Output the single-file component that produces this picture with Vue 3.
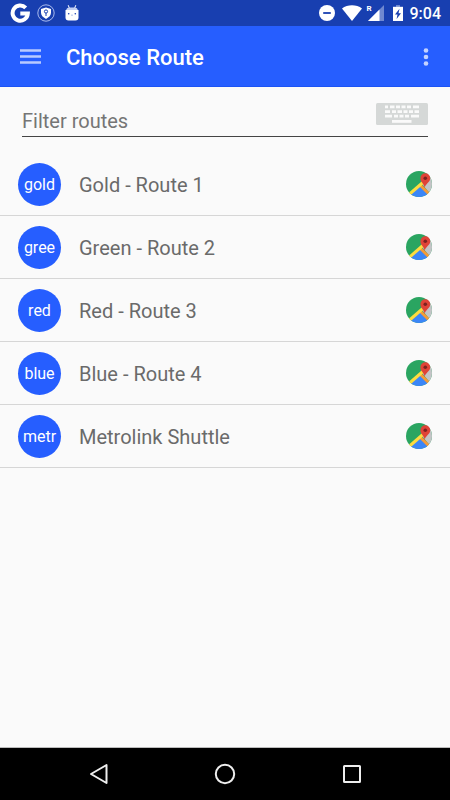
<template>
  <div class="screen">
    <div class="status-bar">
      <div class="status-left">
        <svg class="status-google" viewBox="0 0 20 20" aria-hidden="true">
          <path d="M15.7 4.800A7.600 7.600 0 1 0 17.800 10.600H10.300" fill="none" stroke="#fff" stroke-width="4" />
        </svg>
        <svg class="status-shield" viewBox="0 0 18 18" aria-hidden="true">
          <circle cx="9" cy="9" r="8.2" fill="none" stroke="#a9baec" stroke-width="1" />
          <path d="M9 3.6L14 5v3.6c0 2.7-1.900 4.9-5 6.3-3.100-1.4-5-3.6-5-6.3V5z" fill="#fff" />
          <circle cx="9" cy="7.5" r="1.600" fill="none" stroke="#183fb0" stroke-width="1" />
          <path d="M9 9v3" stroke="#183fb0" stroke-width="1" />
        </svg>
        <svg class="status-droid" viewBox="0 0 14 18" aria-hidden="true">
          <path d="M3.2 1.2l1.2 3M10.8 1.2l-1.2 3" stroke="#fff" stroke-width="1" />
          <path d="M1 6.2Q1.6 3.4 4 3.4h6q2.4 0 3 2.8z" fill="#c3cff3" />
          <path d="M.5 6h13v7.500q0 3-3 3h-7q-3 0-3-3z" fill="#fff" />
          <circle cx="3.7" cy="9.7" r=".8" fill="#183fb0" />
          <circle cx="10.3" cy="9.7" r=".8" fill="#183fb0" />
          <path d="M6 10.8l1 .7 1-.7" fill="none" stroke="#8fa5e3" stroke-width=".7" />
        </svg>
      </div>
      <div class="status-right">
        <svg class="status-dnd" viewBox="0 0 16 16" aria-hidden="true">
          <circle cx="8" cy="8" r="8" fill="#fff" />
          <path d="M4.2 8h7.6" stroke="#183fb0" stroke-width="1.8" />
        </svg>
        <svg class="status-wifi" viewBox="0 0 20 16" aria-hidden="true">
          <path d="M0 3.5C5.5-.8 14.5-.8 20 3.5L10 16z" fill="#fff" />
        </svg>
        <div class="status-cell">
          <span class="roaming">R</span>
          <svg viewBox="0 0 16 16" aria-hidden="true">
            <path d="M16 0v16H0z" fill="#6f88d0" />
            <path d="M11.5 4.5V16H0z" fill="#fff" />
          </svg>
        </div>
        <svg class="status-battery" viewBox="0 0 10 16" aria-hidden="true">
          <path d="M3 0h4v2H3z" fill="#6f88d0" />
          <path d="M0 1.8h10V16H0z" fill="#fff" />
          <path d="M6.5 3.8L2 9.6h2.5L3.6 14 8 8.2H5.5z" fill="#183fb0" />
        </svg>
        <span class="clock">9:04</span>
      </div>
    </div>

    <header class="toolbar">
      <button class="icon-btn menu-btn" type="button" aria-label="Open menu">
        <svg width="22" height="16" viewBox="0 0 22 16">
          <path d="M0 1.500h21M0 7.500h21M0 13.500h21" stroke="#b9caff" stroke-width="2.400" />
        </svg>
      </button>
      <h1>Choose Route</h1>
      <button class="icon-btn more-btn" type="button" aria-label="More options">
        <svg width="6" height="20" viewBox="0 0 6 20">
          <circle cx="3" cy="3.5" r="2.3" fill="#c4d2ff" />
          <circle cx="3" cy="10" r="2.3" fill="#c4d2ff" />
          <circle cx="3" cy="16.5" r="2.3" fill="#c4d2ff" />
        </svg>
      </button>
    </header>

    <main>
      <div class="filter">
        <input v-model="filter" type="text" placeholder="Filter routes" aria-label="Filter routes" />
        <button class="icon-btn keyboard-btn" type="button" aria-label="Keyboard">
          <svg width="52" height="22" viewBox="0 0 52 22">
            <rect width="52" height="22" rx="1.5" fill="#d5d8d7" />
            <g fill="none" stroke="#fafafa" stroke-width="2.800">
              <path d="M9 3.8h3M14 3.8h4.5M20 3.8h4M25.5 3.8h4M31 3.8h4M37 3.8h6" />
              <path d="M9 8.6h5M16 8.6h4M21.5 8.6h4.5M27.5 8.6h4M33 8.6h4M38.5 8.6h4.5" />
              <path d="M9 13.2h7M18 13.2h4M23.5 13.2h4M29 13.2h4M35 13.2h8" />
              <path d="M16 18.4h19.5" />
            </g>
          </svg>
        </button>
      </div>

      <ul class="routes">
        <li v-for="route in filteredRoutes" :key="route.name" class="route">
          <span class="badge">{{ route.code }}</span>
          <span class="name">{{ route.name }}</span>
          <button class="icon-btn" type="button" :aria-label="'Show ' + route.name + ' on map'">
            <svg width="26" height="28" viewBox="0 0 26 28">
              <defs>
                <clipPath :id="'map-' + route.code">
                  <circle cx="13" cy="14" r="13" />
                </clipPath>
              </defs>
              <g :clip-path="'url(#map-' + route.code + ')'">
                <path d="M0 0h26v28H0z" fill="#2aa561" />
                <path d="M26 6L16 14l10 12z" fill="#c3c4c6" />
                <path d="M3 26l10.500-10.500L24 26v2H3z" fill="#3b86f7" />
                <path d="M14.500 15.500l8 8" stroke="#f79a35" stroke-width="2.800" />
                <path d="M2.500 25L18 11.500" stroke="#fddc3f" stroke-width="3" />
              </g>
              <path d="M18.700 18c-.3-4.200-4.300-5.800-4.300-9.800a4.900 4.900 0 0 1 9.800 0C24.200 12.200 19.200 13.800 18.700 18z" fill="#df4337" />
              <circle cx="19.3" cy="8.2" r="1.8" fill="#7a2220" />
            </svg>
          </button>
        </li>
      </ul>
    </main>

    <nav class="nav-bar">
      <button class="icon-btn" type="button" aria-label="Back">
        <svg width="22" height="22" viewBox="0 0 22 22">
          <path d="M19.500 2v18L4 11z" fill="none" stroke="#eee" stroke-width="2" stroke-linejoin="round" />
        </svg>
      </button>
      <button class="icon-btn" type="button" aria-label="Home">
        <svg width="22" height="22" viewBox="0 0 22 22">
          <circle cx="11" cy="11" r="9.2" fill="none" stroke="#eee" stroke-width="2" />
        </svg>
      </button>
      <button class="icon-btn" type="button" aria-label="Recent apps">
        <svg width="22" height="22" viewBox="0 0 22 22">
          <rect x="3" y="3" width="16" height="16" rx=".5" fill="none" stroke="#eee" stroke-width="2" />
        </svg>
      </button>
    </nav>
  </div>
</template>

<script setup>
import { ref, computed } from 'vue';

const filter = ref('');

const routes = [
  { code: 'gold', name: 'Gold - Route 1' },
  { code: 'gree', name: 'Green - Route 2' },
  { code: 'red', name: 'Red - Route 3' },
  { code: 'blue', name: 'Blue - Route 4' },
  { code: 'metr', name: 'Metrolink Shuttle' },
];

const filteredRoutes = computed(() =>
  routes.filter((r) => r.name.toLowerCase().includes(filter.value.toLowerCase()))
);
</script>

<style>
body {
  margin: 0;
  background: #fafafa;
}
</style>

<style scoped>
.screen {
  display: flex;
  flex-direction: column;
  min-height: 100vh;
  background: #fafafa;
  color: #6a6a6a;
  font-family: Roboto, sans-serif;
}
svg {
  display: block;
}
.icon-btn {
  padding: 0;
  border: none;
  background: none;
  cursor: pointer;
}
.status-bar {
  display: flex;
  align-items: center;
  justify-content: space-between;
  height: 26px;
  padding: 0 9px 0 10px;
  background: #183fb0;
  color: #fff;
}
.status-left,
.status-right {
  display: flex;
  align-items: center;
}
.status-google {
  width: 20px;
  height: 20px;
}
.status-shield {
  width: 18px;
  height: 18px;
  margin-left: 7px;
}
.status-droid {
  width: 14px;
  height: 18px;
  margin-left: 10px;
}
.status-dnd {
  width: 16px;
  height: 16px;
}
.status-wifi {
  width: 20px;
  height: 16px;
  margin-left: 7px;
}
.status-cell {
  display: flex;
  margin-left: 4px;
}
.status-cell svg {
  width: 16px;
  height: 16px;
  margin-left: -4px;
}
.roaming {
  font-size: 8px;
  line-height: 8px;
  font-weight: 700;
}
.status-battery {
  width: 10px;
  height: 16px;
  margin-left: 9px;
}
.clock {
  margin-left: 7px;
  padding-top: 2px;
  font-size: 16px;
  line-height: 20px;
  font-weight: 500;
}
.toolbar {
  display: flex;
  align-items: center;
  box-sizing: border-box;
  height: 61px;
  padding: 2px 21px 0 20px;
  border-bottom: 1px solid #1c53f4;
  background: #265eff;
  color: #fff;
}
.toolbar h1 {
  flex: 1;
  margin: 0 0 0 24px;
  padding-top: 2px;
  font-size: 22px;
  line-height: 28px;
  font-weight: 500;
}
main {
  flex: 1;
}
.filter {
  display: flex;
  align-items: flex-start;
  margin: 16px 22px;
  border-bottom: 1px solid #444;
}
.filter input {
  flex: 1;
  min-width: 0;
  height: 33px;
  padding: 2px 0 0;
  box-sizing: border-box;
  border: none;
  outline: none;
  background: transparent;
  color: #444;
  font-family: inherit;
  font-size: 20px;
}
.filter input::placeholder {
  color: #757575;
  opacity: 1;
}
.routes {
  margin: 0;
  padding: 0;
  list-style: none;
}
.route {
  display: flex;
  align-items: center;
  box-sizing: border-box;
  height: 63px;
  padding: 0 18px;
  border-bottom: 1px solid #d6d6d6;
}
.badge {
  display: flex;
  align-items: center;
  justify-content: center;
  box-sizing: border-box;
  width: 43px;
  height: 43px;
  padding-top: 2px;
  border-radius: 50%;
  background: #265eff;
  color: #fff;
  font-size: 16px;
  line-height: 20px;
}
.name {
  flex: 1;
  margin-left: 18px;
  padding-top: 2px;
  font-size: 20px;
  line-height: 24px;
}
.nav-bar {
  display: flex;
  align-items: center;
  justify-content: space-around;
  box-sizing: border-box;
  height: 53px;
  padding: 0 35px;
  border-top: 1px solid #bbb;
  background: #000;
}
</style>
